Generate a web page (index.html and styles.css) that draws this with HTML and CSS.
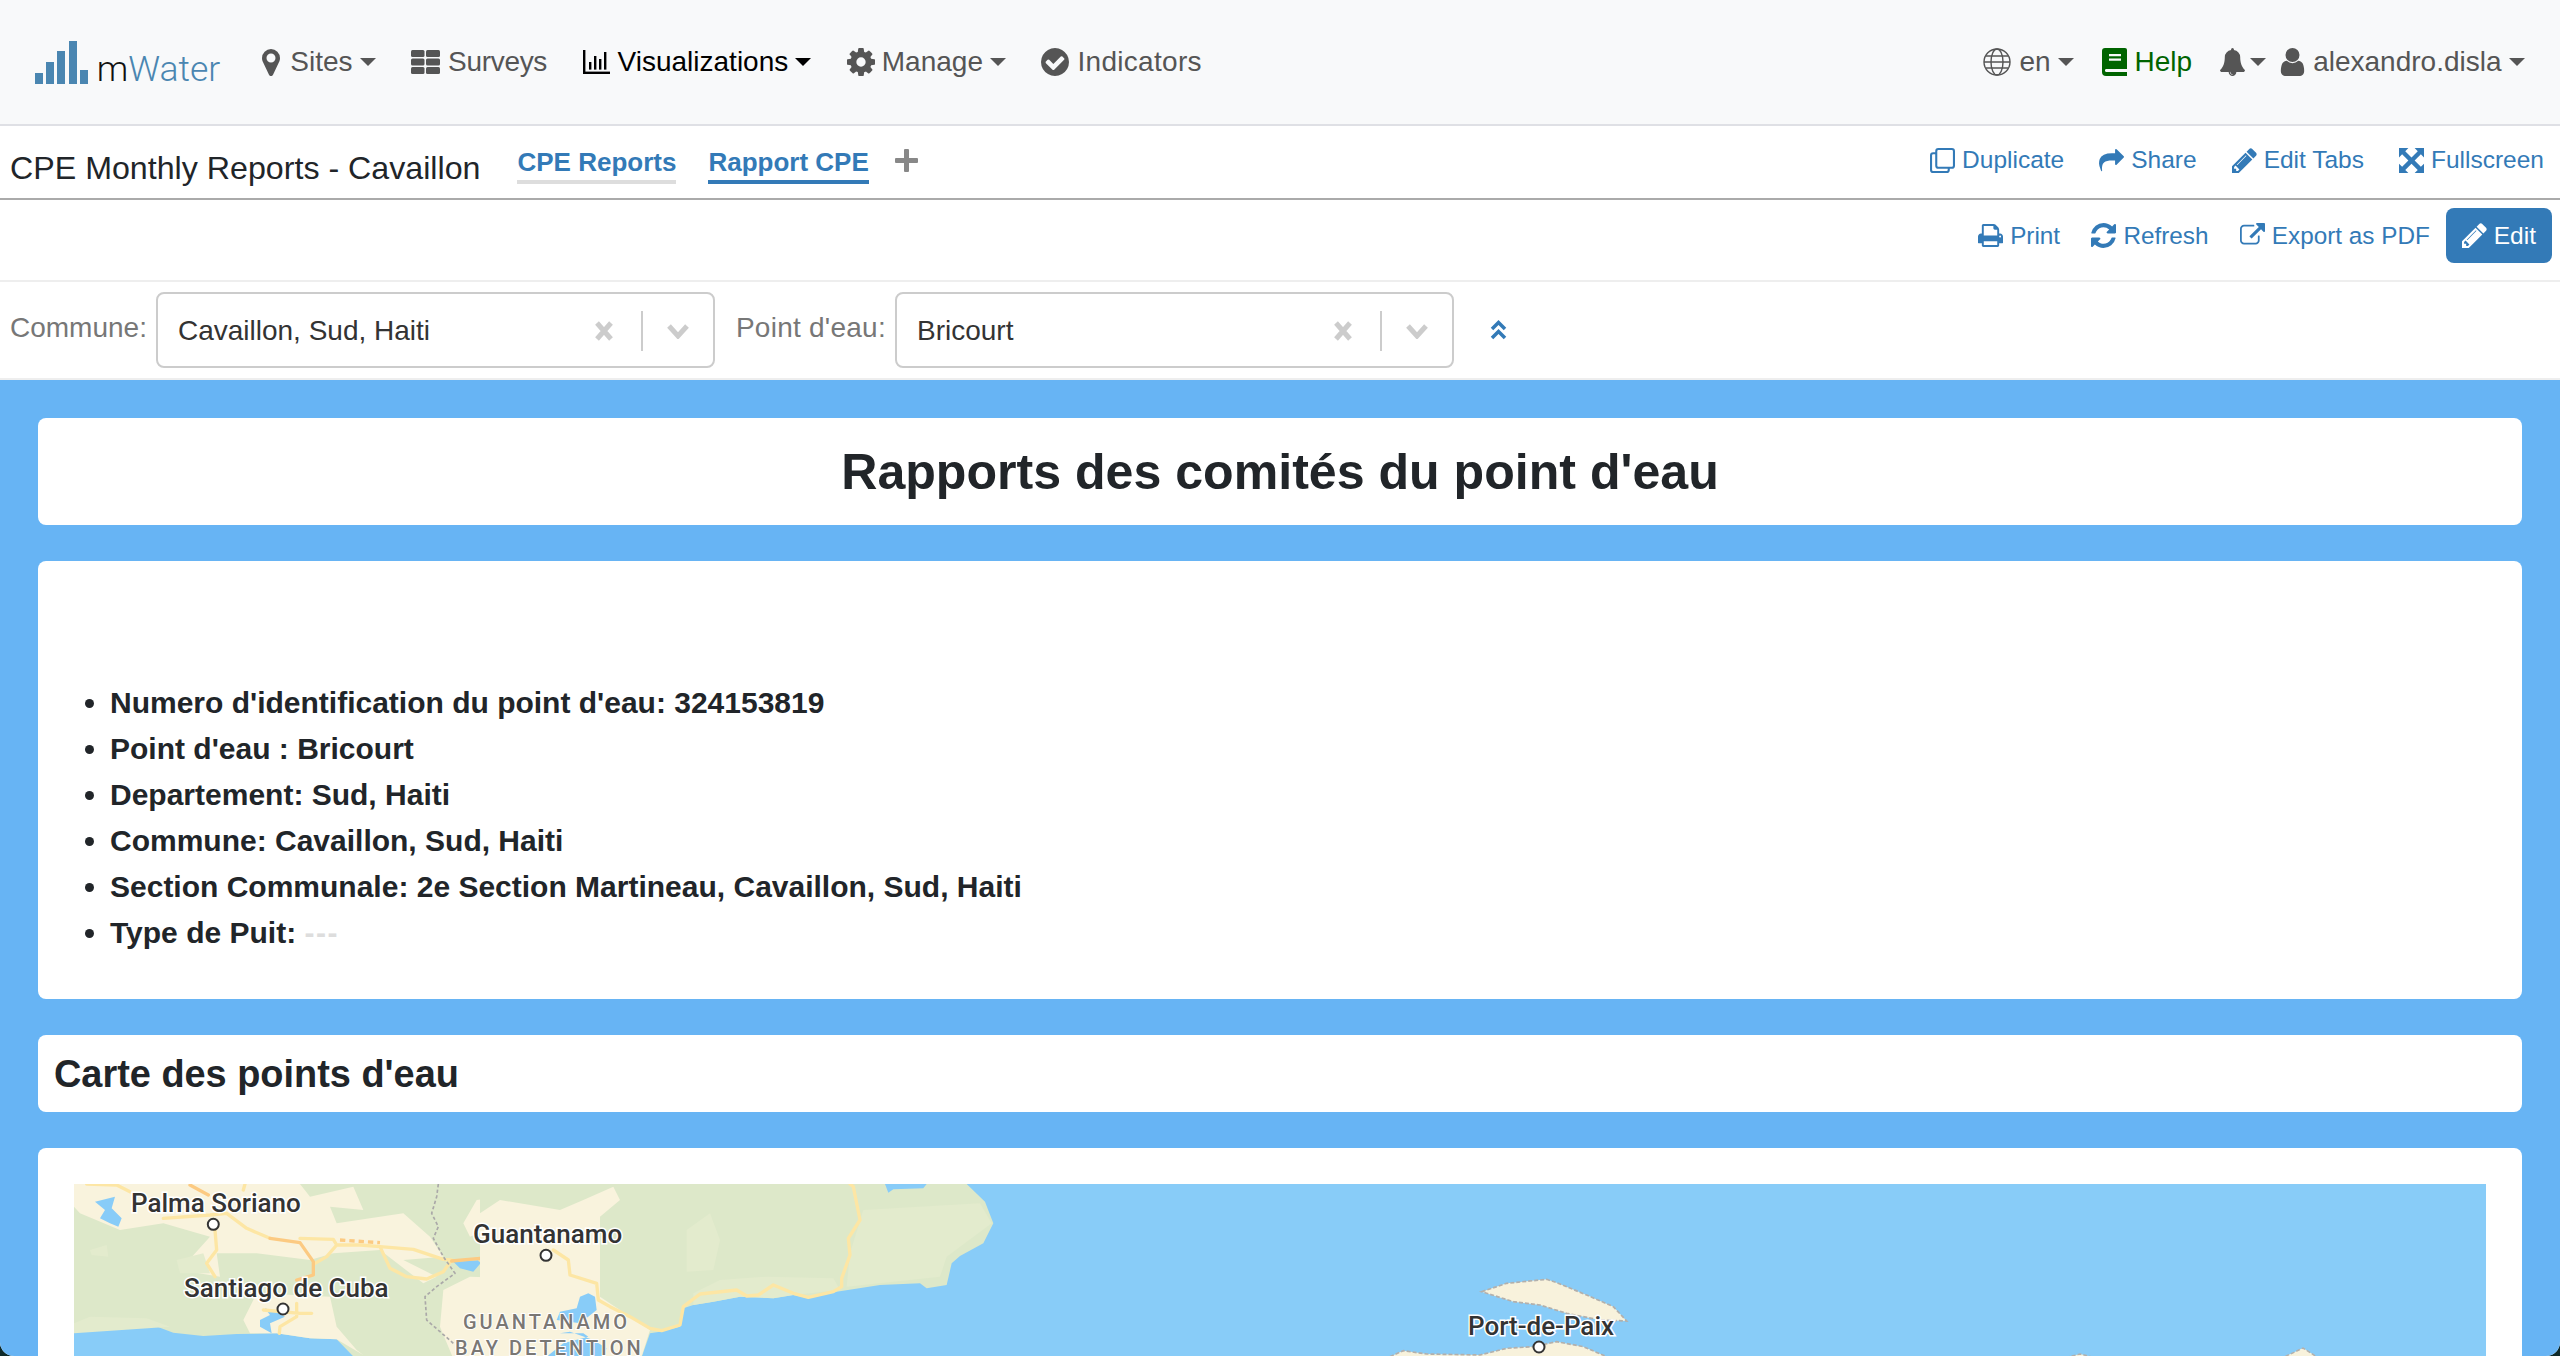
FILE: index.html
```html
<!DOCTYPE html>
<html lang="en">
<head>
<meta charset="utf-8">
<title>CPE Monthly Reports - Cavaillon</title>
<link rel="stylesheet" href="styles.css">
</head>
<body>
<svg class="sprite" xmlns="http://www.w3.org/2000/svg">
  <symbol id="i-pin" viewBox="384 128 1024 1536"><path fill="currentColor" d="M1152 640q0-106-75-181t-181-75-181 75-75 181 75 181 181 75 181-75 75-181zm256 0q0 109-33 179l-364 774q-16 33-47.5 52t-67.5 19-67.5-19-46.5-52l-365-774q-33-70-33-179 0-212 150-362t362-150 362 150 150 362z"/></symbol>
  <symbol id="i-cog" viewBox="128 128 1536 1536"><path fill="currentColor" d="M1152 896q0-106-75-181t-181-75-181 75-75 181 75 181 181 75 181-75 75-181zm512-109v222q0 12-8 23t-20 13l-185 28q-19 54-39 91 35 50 107 138 10 12 10 25t-9 23q-27 37-99 108t-94 71q-12 0-26-9l-138-108q-44 23-91 38-16 136-29 186-7 28-36 28h-222q-14 0-24.5-8.5t-11.5-21.5l-28-184q-49-16-90-37l-141 107q-10 9-25 9-14 0-25-11-126-114-165-168-7-10-7-23 0-12 8-23 15-21 51-66.5t54-70.5q-27-50-41-99l-183-27q-13-2-21-12.5t-8-23.5v-222q0-12 8-23t19-13l186-28q14-46 39-92-40-57-107-138-10-12-10-24 0-10 9-23 26-36 98.5-107.5t94.5-71.5q13 0 26 10l138 107q44-23 91-38 16-136 29-186 7-28 36-28h222q14 0 24.5 8.5t11.5 21.5l28 184q49 16 90 37l142-107q9-9 24-9 13 0 25 10 129 119 165 170 7 8 7 22 0 12-8 23-15 21-51 66.5t-54 70.5q26 50 41 98l183 28q13 2 21 12.5t8 23.5z"/></symbol>
  <symbol id="i-check" viewBox="128 128 1536 1536"><path fill="currentColor" d="M1412 734q0-28-18-46l-91-90q-19-19-45-19t-45 19l-408 407-226-226q-19-19-45-19t-45 19l-91 90q-18 18-18 46 0 27 18 45l362 362q19 19 45 19 27 0 46-19l543-543q18-18 18-45zm252 162q0 209-103 385.5t-279.5 279.5-385.5 103-385.5-103-279.5-279.5-103-385.5 103-385.5 279.5-279.5 385.5-103 385.5 103 279.5 279.5 103 385.5z"/></symbol>
  <symbol id="i-user" viewBox="256 128 1280 1536"><path fill="currentColor" d="M1536 1399q0 109-62.5 187t-150.5 78h-854q-88 0-150.5-78t-62.5-187q0-85 8.5-160.5t31.5-152 58.5-131 94-89 134.5-34.5q131 128 313 128t313-128q76 0 134.5 34.5t94 89 58.5 131 31.5 152 8.5 160.5zm-256-887q0 159-112.5 271.5t-271.5 112.5-271.5-112.5-112.5-271.5 112.5-271.5 271.5-112.5 271.5 112.5 112.5 271.5z"/></symbol>
  <symbol id="i-bell" viewBox="64 0 1664 1792" preserveAspectRatio="none"><path fill="currentColor" d="M912 1696q0-16-16-16-59 0-101.5-42.5t-42.5-101.5q0-16-16-16t-16 16q0 73 51.5 124.5t124.5 51.5q16 0 16-16zm816-288q0 52-38 90t-90 38h-448q0 106-75 181t-181 75-181-75-75-181h-448q-52 0-90-38t-38-90q50-42 91-88t85-119.5 74.5-158.5 50-206 19.5-260q0-152 117-282.5t307-158.5q-8-19-8-39 0-40 28-68t68-28 68 28 28 68q0 20-8 39 190 28 307 158.5t117 282.5q0 139 19.5 260t50 206 74.5 158.5 85 119.5 91 88z"/></symbol>
  <symbol id="i-pencil" viewBox="128 128 1536 1536"><path fill="currentColor" d="M491 1536l91-91-235-235-91 91v107h128v128h107zm523-928q0-22-22-22-10 0-17 7l-542 542q-7 7-7 17 0 22 22 22 10 0 17-7l542-542q7-7 7-17zm-54-192l416 416-832 832h-416v-416zm683 96q0 53-37 90l-166 166-416-416 166-165q36-38 90-38 53 0 91 38l235 234q37 39 37 91z"/></symbol>
  <symbol id="i-share" viewBox="0 128 1792 1536"><path fill="currentColor" d="M1792 640q0 26-19 45l-512 512q-19 19-45 19t-45-19-19-45v-256h-224q-98 0-175.5 6t-154 21.5-133 42.5-105.5 69.5-79 101.5-48 138-18 180q0 55 5 123 0 6 2.5 23.5t2.5 26.5q0 15-8.5 25t-23.5 10q-16 0-28-17-7-9-13-22t-13.5-30-10.5-24q-127-285-127-451 0-199 53-333 162-403 875-403h224v-256q0-26 19-45t45-19 45 19l512 512q19 19 19 45z"/></symbol>
  <symbol id="i-print" viewBox="64 128 1664 1536"><path fill="currentColor" d="M448 1536h896v-256h-896v256zm0-640h896v-384h-160q-40 0-68-28t-28-68v-160h-640v640zm1152 64q0-26-19-45t-45-19-45 19-19 45 19 45 45 19 45-19 19-45zm128 0v416q0 13-9.5 22.5t-22.5 9.5h-224v160q0 40-28 68t-68 28h-960q-40 0-68-28t-28-68v-160h-224q-13 0-22.5-9.5t-9.5-22.5v-416q0-79 56.5-135.5t135.5-56.5h64v-544q0-40 28-68t68-28h672q40 0 88 20t76 48l152 152q28 28 48 76t20 88v256h64q79 0 135.5 56.5t56.5 135.5z"/></symbol>
  <symbol id="i-refresh" viewBox="128 128 1536 1536"><path fill="currentColor" d="M1639 1056q0 5-1 7-64 268-268 434.5t-478 166.5q-146 0-282.5-55t-243.5-157l-129 129q-19 19-45 19t-45-19-19-45v-448q0-26 19-45t45-19h448q26 0 45 19t19 45-19 45l-137 137q71 66 161 102t187 36q134 0 250-65t186-179q11-17 53-117 8-23 30-23h192q13 0 22.5 9.5t9.5 22.5zm25-800v448q0 26-19 45t-45 19h-448q-26 0-45-19t-19-45 19-45l138-138q-148-137-349-137-134 0-250 65t-186 179q-11 17-53 117-8 23-30 23h-199q-13 0-22.5-9.5t-9.5-22.5v-7q65-268 270-434.5t480-166.5q146 0 284 55.5t245 156.5l130-129q19-19 45-19t45 19 19 45z"/></symbol>
  <symbol id="i-export" viewBox="0 0 1792 1792"><path fill="currentColor" d="M1408 928v320q0 119-84.5 203.5t-203.5 84.5h-832q-119 0-203.5-84.5t-84.5-203.5v-832q0-119 84.5-203.5t203.5-84.5h704q14 0 23 9t9 23v64q0 14-9 23t-23 9h-704q-66 0-113 47t-47 113v832q0 66 47 113t113 47h832q66 0 113-47t47-113v-320q0-14 9-23t23-9h64q14 0 23 9t9 23zm384-864v512q0 26-19 45t-45 19-45-19l-176-176-652 652q-10 10-23 10t-23-10l-114-114q-10-10-10-23t10-23l652-652-176-176q-19-19-19-45t19-45 45-19h512q26 0 45 19t19 45z"/></symbol>
  <symbol id="i-table" viewBox="0 0 29 24"><g fill="currentColor"><rect x="0" y="0" width="13.5" height="7" rx="1.5"/><rect x="15" y="0" width="14" height="7" rx="1.5"/><rect x="0" y="8.5" width="13.5" height="7" rx="1.5"/><rect x="15" y="8.5" width="14" height="7" rx="1.5"/><rect x="0" y="17" width="13.5" height="7" rx="1.5"/><rect x="15" y="17" width="14" height="7" rx="1.5"/></g></symbol>
  <symbol id="i-chart" viewBox="0 0 27 24"><g fill="currentColor"><rect x="0" y="0" width="2.4" height="24"/><rect x="0" y="21.6" width="27" height="2.4"/><rect x="6" y="12" width="2.4" height="7.6"/><rect x="11" y="6" width="2.4" height="13.6"/><rect x="16" y="9" width="2.4" height="10.6"/><rect x="21" y="2" width="2.4" height="17.6"/></g></symbol>
  <symbol id="i-globe" viewBox="0 0 28 28"><g fill="none" stroke="currentColor" stroke-width="1.4"><circle cx="14" cy="14" r="13"/><ellipse cx="14" cy="14" rx="6" ry="13"/><path d="M3 8h22M3 20h22M1 14h26"/></g></symbol>
  <symbol id="i-book" viewBox="0 0 25 28"><path fill="currentColor" d="M3 0h20a2 2 0 0 1 2 2v26H4a4 4 0 0 1-4-4V3a3 3 0 0 1 3-3z"/><path fill="#f8f9fa" d="M7 6h12v2.200H7zM7 10.500h12v2.200H7zM4 21h21v3H5a1.500 1.500 0 0 1-1-3z"/></symbol>
  <symbol id="i-copy" viewBox="0 0 24 24"><g fill="none" stroke="currentColor" stroke-width="2"><rect x="6" y="1" width="17" height="18" rx="2"/><path d="M6 5H3a2 2 0 0 0-2 2v14a2 2 0 0 0 2 2h13a2 2 0 0 0 2-2v-2"/></g></symbol>
  <symbol id="i-expand" viewBox="0 0 24 24"><g fill="currentColor"><path d="M0 0h9l-3 3 6 6 6-6-3-3h9v9l-3-3-6 6 6 6 3-3v9h-9l3-3-6-6-6 6 3 3H0v-9l3 3 6-6-6-6-3 3z"/></g></symbol>
</svg>

<div class="app">
  <nav class="navbar">
    <a class="logo"><span class="logo-bars"><i class="bar b1"></i><i class="bar b2"></i><i class="bar b3"></i><i class="bar b4"></i><i class="bar b5"></i></span><span class="logo-text"><span class="logo-m">m</span>Water</span></a>
    <ul class="nav-list">
      <li class="nav-item"><svg class="ico ico-pin"><use href="#i-pin"/></svg>Sites<span class="caret"></span></li>
      <li class="nav-item kerned"><svg class="ico ico-table"><use href="#i-table"/></svg>Surveys</li>
      <li class="nav-item active"><svg class="ico ico-chart"><use href="#i-chart"/></svg>Visualizations<span class="caret"></span></li>
      <li class="nav-item snug"><svg class="ico ico-cog"><use href="#i-cog"/></svg>Manage<span class="caret"></span></li>
      <li class="nav-item roomy"><svg class="ico ico-cog"><use href="#i-check"/></svg>Indicators</li>
    </ul>
    <ul class="nav-list nav-right">
      <li class="nav-item"><svg class="ico ico-cog"><use href="#i-globe"/></svg>en<span class="caret"></span></li>
      <li class="nav-item help"><svg class="ico ico-book"><use href="#i-book"/></svg>Help</li>
      <li class="nav-item tight"><svg class="ico ico-book"><use href="#i-bell"/></svg><span class="caret"></span></li>
      <li class="nav-item user"><svg class="ico ico-book"><use href="#i-user"/></svg>alexandro.disla<span class="caret"></span></li>
    </ul>
  </nav>

  <header class="tabbar">
    <h1 class="doc-title">CPE Monthly Reports - Cavaillon</h1>
    <div class="tabs">
      <a class="tab">CPE Reports</a>
      <a class="tab tab-active">Rapport CPE</a>
      <span class="tab-add"></span>
    </div>
    <div class="links links-top">
      <a class="link"><svg class="ico ico-sm"><use href="#i-copy"/></svg>Duplicate</a>
      <a class="link"><svg class="ico ico-sm"><use href="#i-share"/></svg>Share</a>
      <a class="link"><svg class="ico ico-sm"><use href="#i-pencil"/></svg>Edit Tabs</a>
      <a class="link"><svg class="ico ico-sm"><use href="#i-expand"/></svg>Fullscreen</a>
    </div>
  </header>

  <div class="toolbar">
    <a class="link"><svg class="ico ico-sm"><use href="#i-print"/></svg>Print</a>
    <a class="link"><svg class="ico ico-sm"><use href="#i-refresh"/></svg>Refresh</a>
    <a class="link"><svg class="ico ico-sm"><use href="#i-export"/></svg>Export as PDF</a>
    <a class="btn-edit"><svg class="ico ico-sm"><use href="#i-pencil"/></svg>Edit</a>
  </div>

  <div class="filters">
    <label class="filter-label">Commune:</label>
    <div class="select">
      <span class="select-value">Cavaillon, Sud, Haiti</span>
      <svg class="sel-x" viewBox="0 0 20 20"><path d="M3 2l14 16M17 2L3 18"/></svg>
      <span class="sel-sep"></span>
      <svg class="sel-chev" viewBox="0 0 24 16"><path d="M3 3l9 10 9-10"/></svg>
    </div>
    <label class="filter-label wide">Point d'eau:</label>
    <div class="select">
      <span class="select-value">Bricourt</span>
      <svg class="sel-x" viewBox="0 0 20 20"><path d="M3 2l14 16M17 2L3 18"/></svg>
      <span class="sel-sep"></span>
      <svg class="sel-chev" viewBox="0 0 24 16"><path d="M3 3l9 10 9-10"/></svg>
    </div>
    <svg class="collapse" viewBox="0 0 17 20"><path d="M2 9l6.500-6.500L15 9M2 18l6.500-6.500L15 18"/></svg>
  </div>

  <main class="dashboard">
    <section class="card card-title"><h2>Rapports des comités du point d'eau</h2></section>
    <section class="card card-info">
      <ul class="facts">
        <li>Numero d'identification du point d'eau: 324153819</li>
        <li>Point d'eau : Bricourt</li>
        <li>Departement: Sud, Haiti</li>
        <li>Commune: Cavaillon, Sud, Haiti</li>
        <li>Section Communale: 2e Section Martineau, Cavaillon, Sud, Haiti</li>
        <li>Type de Puit: <span class="blank">---</span></li>
      </ul>
    </section>
    <section class="card card-heading"><h3>Carte des points d'eau</h3></section>
    <section class="card card-map">
      <svg class="map" viewBox="0 0 2412 400" xmlns="http://www.w3.org/2000/svg">
        <rect class="water" width="2412" height="400"/>
        <g transform="translate(-4 -4) scale(.33333)">
          <path class="green" d="M12 12H1500V560H880L800 478 720 475 620 460 500 462 400 468 310 458 240 432 130 425 60 430 12 455z"/>
          <path class="cream" d="M12 12H690L720 50 850 20 880 90 780 80 800 130 1000 100 1080 170 1120 230 1000 240 1100 290 1060 310 930 210 790 220 720 240 560 220 440 220 450 290 330 270 420 170 280 130 150 150 30 100 12 80z"/>
          <path class="cream" d="M560 340L780 350 800 440 860 510 880 525 800 478 720 475 620 460 540 460 520 420z"/>
          <path class="cream" d="M1180 130L1220 60 1340 45 1500 70 1500 95 1300 130 1200 170z"/>
          <path class="cream" d="M1120 330L1200 290 1500 300 1500 560 1160 560 1110 440z"/>
          <path class="soft" d="M12 430L60 410 230 415 300 440 12 460zM60 210L110 195 115 230 65 225zM320 240L400 220 420 280 330 280z"/>
          <path class="water" d="M75 65L135 50 125 85 155 115 145 140 120 130 90 115 105 90zM585 385L615 395 645 410 600 430 605 460 570 440 570 420 600 405zM1240 110L1340 125 1330 150 1290 140zM1150 245L1240 240 1210 275 1170 265z"/>
          <path class="road-y" d="M280 115L420 105 470 100 530 145 600 175M690 175L790 178 800 195 870 195 930 200 1030 208 1120 238 1145 240M800 195L770 230 735 250M930 200L960 265 1010 290 1070 297 1120 275 1145 240M435 150L440 210 410 250 435 290M1230 240L1280 250 1380 232 1410 228M1440 205L1480 225 1500 290 1560 305M50 12L140 15 180 35M525 12L520 30M580 390L690 400 725 400M680 370L680 410 630 440 628 460"/>
          <path class="road-o" d="M600 175L690 188 730 245 730 285 680 300M1145 243L1230 235 1300 240 1380 205 1420 200M360 15L415 45"/>
          <path class="road-o dashed" d="M810 180L930 188"/>
          <path class="border" d="M1105 12L1100 50 1085 100 1105 140 1090 175 1120 230 1155 280 1100 320 1065 350 1070 420 1110 455 1150 490"/>
        </g>
        <g transform="translate(406 -4) scale(.33333)">
          <path class="green" d="M0 12H1460L1515 65 1540 130 1510 190 1440 228 1415 250 1400 315 1340 325 1320 310 1200 315 1070 335 985 355 940 345 880 355 780 350 700 365 640 375 610 385 600 440 540 455 510 460 475 560H0z"/>
          <path class="cream" d="M0 100L60 60 240 90 310 60 400 20 420 60 360 110 360 350 420 390 510 450 475 560H0z"/>
          <path class="soft" d="M620 150L690 100 720 180 700 270 620 275zM640 340L720 300 860 290 1060 295 1080 330 940 345 880 355 780 350 700 365 640 375zM1150 90L1500 70 1535 130 1400 230 1380 290 1100 320 1110 220z"/>
          <path class="water" d="M300 350L325 340 345 350 350 390 300 430 230 420 240 395 290 385zM240 460L310 460 325 470 250 490 200 530H370L380 505 340 480 270 455zM1215 12H1340L1330 25 1240 28 1225 38z"/>
          <path class="road-y" d="M220 210L265 240 270 285 350 310 355 360 390 380 450 410 510 445 545 452 600 435 610 380 660 342 770 330 800 348 835 345 880 315 940 340 985 352 1060 335 1085 320 1085 295 1110 225 1105 175 1140 120 1120 20 1110 12"/>
        </g>
        <g transform="translate(1226 76) scale(.33333)">
          <path class="island" d="M545 95L620 70 740 58 770 68 860 105 940 140 980 183 900 180 800 160 720 135 640 125z"/>
          <path class="island" d="M270 290L310 272 380 282 540 285 620 265 700 260 770 245 850 260 920 290V330H270z"/>
        </g>
        <path class="islet" d="M1986 175L2006 170 2026 175zM2206 175L2229 164 2246 175z"/>
        <text class="place" x="57" y="28">Palma Soriano</text>
        <text class="place" x="110" y="113">Santiago de Cuba</text>
        <text class="place" x="399" y="59">Guantanamo</text>
        <text class="place" x="1394" y="151">Port-de-Paix</text>
        <text class="region" x="389" y="145">GUANTANAMO</text>
        <text class="region" x="381" y="171">BAY DETENTION</text>
        <circle class="town" cx="139.300" cy="40.300" r="5.500"/>
        <circle class="town" cx="209" cy="125" r="5.500"/>
        <circle class="town" cx="472" cy="71.300" r="5.500"/>
        <circle class="town" cx="1465" cy="163" r="5.500"/>
      </svg>
    </section>
  </main>
</div>
</body>
</html>
```

FILE: styles.css
```css
* { box-sizing: border-box; }
html, body { margin: 0; padding: 0; height: 100%; }
body {
  background: #0e2a2a;
  font-family: "Liberation Sans", Arial, sans-serif;
  overflow: hidden;
}
.sprite { position: absolute; width: 0; height: 0; overflow: hidden; }
.app {
  height: 1356px;
  display: flex;
  flex-direction: column;
  overflow: hidden;
  background: #fff;
  border-radius: 0 0 14px 14px;
}
.ico { display: block; flex: none; margin-right: 8px; }

/* navbar */
.navbar {
  flex: none;
  height: 126px;
  display: flex;
  align-items: center;
  padding: 0 35.500px 0 35px;
  background: #f8f9fa;
  border-bottom: 2px solid #dfe0e5;
}
.logo { display: flex; align-items: flex-end; height: 43px; margin-right: 40px; margin-top: 1px; }
.logo-bars { display: flex; align-items: flex-end; gap: 3.200px; height: 43px; }
.bar { display: block; width: 8px; background: #4a86b1; }
.b1 { height: 11px; }
.b2 { height: 22px; }
.b3 { height: 33px; }
.b4 { height: 43px; }
.b5 { height: 14px; }
.logo-text {
  margin-left: 9px;
  font-family: Roboto, sans-serif;
  font-weight: 300;
  font-size: 35.500px;
  line-height: 30px;
  color: #4a86b1;
}
.logo-m { color: #111; }
.nav-list { display: flex; align-items: center; gap: 35.500px; margin: 0; padding: 0; list-style: none; }
.nav-right { margin-left: auto; gap: 28px; }
.nav-item { display: flex; align-items: center; font-size: 28px; line-height: 32px; color: #555; white-space: nowrap; }
.nav-item.active { color: #000; }
.nav-item.help { color: #006400; }
.nav-item.kerned { letter-spacing: -.3px; }
.nav-item.roomy { letter-spacing: .3px; }
.nav-item.snug .ico { margin-right: 7px; }
.nav-item.tight { margin-right: -14px; }
.nav-item.tight .ico { margin-right: 5px; }
.nav-item.tight .caret { margin-left: 0; }
.ico-pin { width: 22px; height: 27px; }
.ico-table { width: 29px; height: 24px; }
.ico-chart { width: 27px; height: 24px; }
.ico-cog { width: 28px; height: 28px; }
.ico-book { width: 25px; height: 28px; }
.caret {
  width: 0;
  height: 0;
  margin-left: 7px;
  border-top: 8.500px solid currentColor;
  border-left: 8px solid transparent;
  border-right: 8px solid transparent;
}

/* tabs row */
.tabbar {
  flex: none;
  height: 74px;
  display: flex;
  align-items: flex-start;
  padding: 21px 16px 0 10px;
  background: #fff;
  border-bottom: 2px solid #aaa;
}
.doc-title { margin: 2px 37px 0 0; font-size: 32.200px; line-height: 38px; font-weight: 400; color: #212529; white-space: nowrap; }
.tabs { display: flex; align-items: flex-start; gap: 32px; }
.tab { padding-bottom: 3px; font-size: 26px; line-height: 30px; font-weight: 700; color: #337ab7; border-bottom: 4px solid #ddd; white-space: nowrap; }
.tab-active { border-bottom-color: #337ab7; }
.tab-add { position: relative; width: 23px; height: 23px; margin: 2px 0 0 -6px; }
.tab-add::before, .tab-add::after { content: ""; position: absolute; background: #888; border-radius: 1px; }
.tab-add::before { left: 0; right: 0; top: 9px; height: 5px; }
.tab-add::after { top: 0; bottom: 0; left: 9px; width: 5px; }
.links { display: flex; align-items: center; gap: 35px; }
.links-top { margin: -2px 0 0 auto; }
.link { display: flex; align-items: center; font-size: 24.500px; line-height: 30px; color: #337ab7; white-space: nowrap; }
.ico-sm { width: 25px; height: 25px; margin-right: 7px; }

/* toolbar */
.toolbar {
  flex: none;
  height: 82px;
  display: flex;
  align-items: center;
  justify-content: flex-end;
  gap: 31.300px;
  padding: 0 8px 9px 0;
  background: #fff;
  border-bottom: 2px solid #eee;
}
.toolbar .link { font-size: 24.300px; }
.btn-edit {
  display: flex;
  align-items: center;
  height: 55px;
  margin-left: -15.300px;
  padding: 0 16px;
  border-radius: 8px;
  background: #337ab7;
  color: #fff;
  font-size: 24.500px;
}

/* filters */
.filters {
  flex: none;
  height: 98px;
  display: flex;
  align-items: center;
  padding: 0 10px;
  background: #fff;
  border-bottom: 2px solid #eee;
}
.filter-label { margin: -4px 9px 0 0; font-size: 28px; line-height: 32px; color: #777; white-space: nowrap; }
.filter-label.wide { letter-spacing: .25px; }
.select {
  display: flex;
  align-items: center;
  flex: none;
  width: 559px;
  height: 76px;
  margin-right: 21px;
  padding: 2px 23px 0 20px;
  border: 2px solid #ccc;
  border-radius: 8px;
  background: #fff;
}
.select-value { flex: 1; font-size: 28px; line-height: 32px; color: #333; white-space: nowrap; }
.sel-x { width: 20px; height: 20px; fill: none; stroke: #ccc; stroke-width: 5px; }
.sel-sep { width: 2px; height: 40px; margin: 0 23px 0 27px; background: #ccc; }
.sel-chev { width: 24px; height: 16px; fill: none; stroke: #ccc; stroke-width: 5px; }
.collapse { width: 17px; height: 20px; margin-left: 15px; fill: none; stroke: #337ab7; stroke-width: 3.500px; }

/* dashboard */
.dashboard {
  flex: 1;
  min-height: 0;
  display: flex;
  flex-direction: column;
  gap: 36px;
  padding: 38px 38px 0;
  overflow: hidden;
  background: #67b4f4;
}
.card { flex: none; background: #fff; border-radius: 8px; }
.card-title { height: 107px; display: flex; align-items: center; justify-content: center; }
.card-title h2 { margin: 0; font-size: 50.100px; line-height: 58px; font-weight: 700; color: #212529; }
.card-info { height: 438px; padding: 119px 0 0 72px; }
.facts { margin: 0; padding: 0; }
.facts li { font-size: 30px; line-height: 46px; font-weight: 700; color: #212529; }
.blank { color: #ddd; letter-spacing: 1.500px; }
.card-heading { height: 77px; display: flex; align-items: center; padding-left: 16px; }
.card-heading h3 { margin: 0; font-size: 37.900px; line-height: 46px; font-weight: 700; color: #212529; }
.card-map { padding: 36px; }
.map { display: block; width: 2412px; height: 400px; }

/* map drawing */
.water { fill: #88ccf8; }
.green { fill: #dde8c9; }
.cream { fill: #f9f3dd; }
.soft { fill: #e3ebcd; }
.road-y, .road-o, .border { fill: none; stroke-linejoin: round; stroke-linecap: round; }
.road-y { stroke: #fde6a4; stroke-width: 10px; }
.road-o { stroke: #fcca82; stroke-width: 10px; }
.dashed { stroke-dasharray: 16 12; stroke-linecap: butt; }
.border { stroke: #aaa8a8; stroke-width: 5px; stroke-dasharray: 10 7; stroke-linecap: butt; }
.island { fill: #f8f2dc; stroke: #b3b0ac; stroke-width: 5px; stroke-dasharray: 12 6; }
.islet { fill: #f8f2dc; stroke: #b3b0ac; stroke-width: 1.500px; stroke-dasharray: 4 2; }
.place {
  font-family: Roboto, sans-serif;
  font-size: 26px;
  font-weight: 500;
  fill: #333;
  stroke: #fff;
  stroke-width: 3px;
  paint-order: stroke;
}
.region {
  font-family: Roboto, sans-serif;
  font-size: 20px;
  font-weight: 500;
  letter-spacing: 3px;
  fill: #7a7774;
  stroke: #fff;
  stroke-width: 2px;
  paint-order: stroke;
}
.town { fill: #fff; stroke: #333; stroke-width: 2px; }
```
